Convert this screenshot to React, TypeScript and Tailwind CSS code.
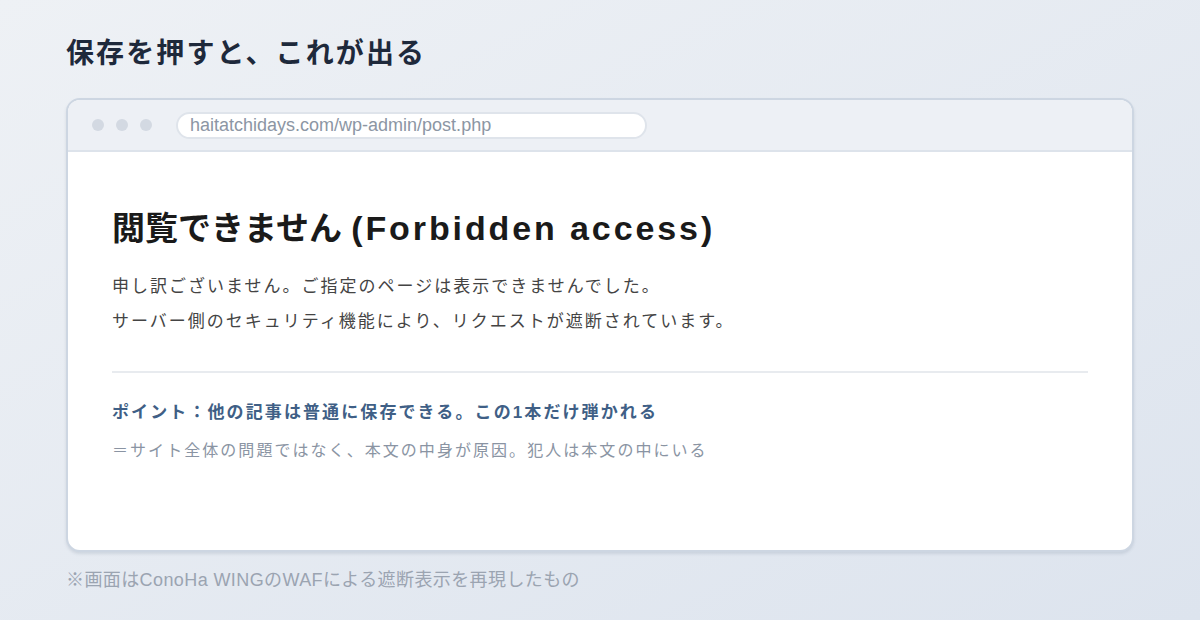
import React from 'react';

const font = { fontFamily: '"Liberation Sans", "Noto Sans CJK JP", sans-serif' };

// Fake browser chrome: traffic dots + address pill
const BrowserBar: React.FC<{ url: string }> = ({ url }) => (
  <div className="flex h-[52px] items-center gap-6 border-b-2 border-[#dde3eb] bg-[#edf0f5] pl-6">
    <div className="flex gap-3">
      <span className="h-3 w-3 rounded-full bg-[#d3d9e2]" />
      <span className="h-3 w-3 rounded-full bg-[#d3d9e2]" />
      <span className="h-3 w-3 rounded-full bg-[#d3d9e2]" />
    </div>
    <div className="flex h-[27px] w-[471px] items-center rounded-full border-2 border-[#dfe4eb] bg-white pl-3 text-[18px] text-[#8c96a4]">
      {url}
    </div>
  </div>
);

export default function App() {
  return (
    <div
      className="flex h-[620px] w-[1200px] flex-col bg-gradient-to-br from-[#eef1f5] to-[#dde4ee] px-[66px] pt-[36px]"
      style={font}
    >
      <h1 className="text-[28px] font-bold leading-[36px] tracking-[2.1px] text-[#1e293b]">
        保存を押すと、これが出る
      </h1>

      <div className="mt-[26px] overflow-hidden rounded-[14px] border-2 border-[#cdd6e2] bg-white shadow-[0_2px_3px_rgba(100,116,139,0.18)]">
        <BrowserBar url="haitatchidays.com/wp-admin/post.php" />

        <div className="h-[398px] px-[44px] pt-[54px]">
          <h2 className="text-[33px] font-bold leading-[44px] text-[#1a1a1a]">
            閲覧できません <span className="text-[34px] tracking-[2.9px]">(Forbidden access)</span>
          </h2>
          <div className="mt-[18px] text-[17px] leading-[35px] tracking-[2px] text-[#444]">
            <p>申し訳ございません。ご指定のページは表示できませんでした。</p>
            <p>サーバー側のセキュリティ機能により、リクエストが遮断されています。</p>
          </div>

          <hr className="mt-[32px] border-t-2 border-[#e8ebef]" />

          <p className="mt-[27px] text-[17px] font-bold leading-[26px] tracking-[2.1px] text-[#3f5f86]">
            ポイント：他の記事は普通に保存できる。この1本だけ弾かれる
          </p>
          <p className="mt-[12px] text-[16px] leading-[26px] tracking-[2.05px] text-[#8a94a3]">
            ＝サイト全体の問題ではなく、本文の中身が原因。犯人は本文の中にいる
          </p>
        </div>
      </div>

      <p className="mt-[16px] text-[18px] leading-[24px] tracking-[0.4px] text-[#9ba4b1]">
        ※画面はConoHa WINGのWAFによる遮断表示を再現したもの
      </p>
    </div>
  );
}
